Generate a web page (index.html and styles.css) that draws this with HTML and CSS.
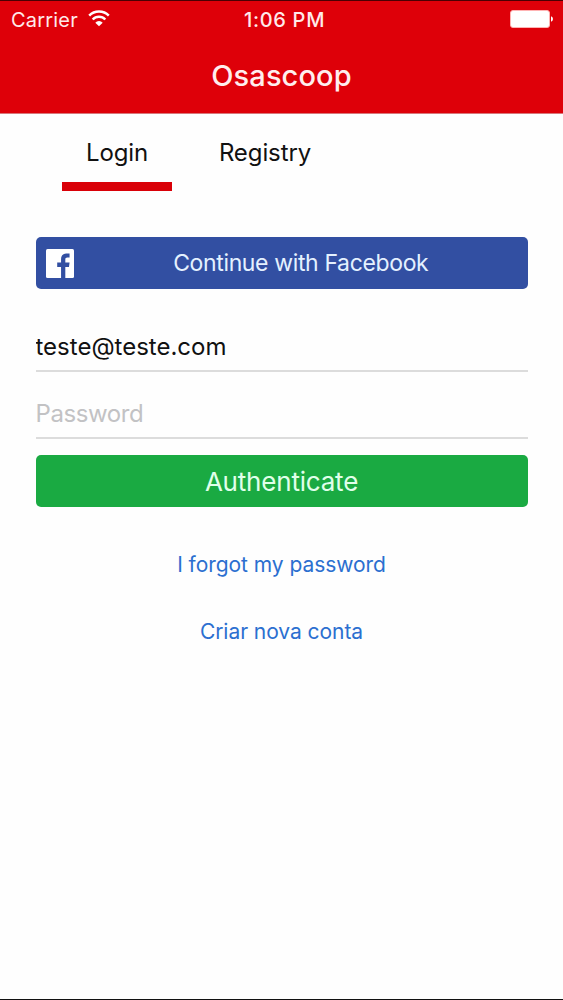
FILE: index.html
```html
<!DOCTYPE html>
<html lang="en">
<head>
    <meta charset="UTF-8">
    <meta name="viewport" content="width=device-width, initial-scale=1.0">
    <title>Osascoop</title>
    <link rel="stylesheet" href="styles.css">
</head>
<body>
    <header class="header">
        <div class="status-bar">
            <div class="status-left">
                <span class="carrier">Carrier</span>
                <svg class="wifi" width="22" height="17" viewBox="0 0 22 17">
                    <path d="M1.2 5.6 A13.8 13.8 0 0 1 20.8 5.6" fill="none" stroke="#fff" stroke-width="2.5"/>
                    <path d="M4.7 9.5 A8.6 8.6 0 0 1 17.3 9.5" fill="none" stroke="#fff" stroke-width="2.5"/>
                    <path d="M11 16.3 L7.3 12.7 A5 5 0 0 1 14.7 12.7 Z" fill="#fff"/>
                </svg>
            </div>
            <span class="time">1:06 PM</span>
            <div class="status-right">
                <svg class="battery" width="43" height="18" viewBox="0 0 43 18">
                    <rect x="0.5" y="0.5" width="39" height="17" rx="2.5" fill="#fff" stroke="#ffb3b3"/>
                    <path d="M41 6.3 Q43 7 43 9 Q43 11 41 11.7 Z" fill="#fff"/>
                </svg>
            </div>
        </div>
        <h1 class="title">Osascoop</h1>
    </header>

    <main>
        <nav class="tabs">
            <a href="#" class="tab active">Login</a>
            <a href="#" class="tab">Registry</a>
        </nav>

        <form class="login-form" id="loginForm">
            <button type="button" class="btn btn-facebook">
                <svg class="fb-icon" width="28" height="29" viewBox="0 0 29 29" preserveAspectRatio="none">
                    <rect width="29" height="29" rx="1.6" fill="#fff"/>
                    <path d="M15.6 29 V18 H11.6 V13.5 H15.6 V10.3 C15.6 6.6 17.6 4.5 21 4.5 H24.4 V8.5 H22.2 C20.4 8.5 20 9.4 20 10.8 V13.5 H24.4 L23.8 18 H20 V29 Z" fill="#324fa2"/>
                </svg>
                <span class="fb-label">Continue with Facebook</span>
            </button>
            <input type="text" class="field field-email" name="email" value="teste@teste.com">
            <input type="password" class="field field-password" name="password" placeholder="Password">
            <button type="submit" class="btn btn-submit">Authenticate</button>
        </form>

        <div class="links">
            <a href="#">I forgot my password</a>
            <a href="#">Criar nova conta</a>
        </div>
    </main>
</body>
</html>
```
FILE: styles.css
```css
* {
    box-sizing: border-box;
}
body {
    margin: 0;
    height: 1000px;
    font-family: Inter, "Liberation Sans", sans-serif;
    background: #fefefe;
    color: #111;
    border-bottom: 1px solid #111;
    overflow: hidden;
}
.header {
    height: 114px;
    background: #de0009;
    border-top: 1px solid #4a0003;
    border-bottom: 1px solid #d8777b;
    color: #fff;
}
.status-bar {
    display: grid;
    grid-template-columns: 1fr auto 1fr;
    height: 37px;
    padding: 0 10px 0 11px;
    align-items: center;
    font-size: 20px;
    color: #ffeaea;
}
.status-left {
    display: flex;
    align-items: center;
    gap: 10px;
}
.carrier {
    letter-spacing: 0.2px;
}
.wifi {
    margin-top: -3px;
}
.time {
    padding-left: 5px;
    font-weight: 500;
    letter-spacing: 0.7px;
}
.status-right {
    display: flex;
    justify-content: flex-end;
}
.battery {
    margin-top: -1px;
}
.title {
    margin: 0;
    height: 75px;
    line-height: 75px;
    text-align: center;
    font-size: 29px;
    font-weight: 500;
    letter-spacing: 0.1px;
    color: #ffeeee;
}
.tabs {
    display: flex;
    height: 77px;
    padding-left: 62px;
}
.tab {
    width: 110px;
    padding-top: 24px;
    line-height: 29px;
    text-align: center;
    font-size: 24px;
    letter-spacing: -0.1px;
    color: #111;
    text-decoration: none;
}
.tab + .tab {
    width: 186px;
}
.active {
    border-bottom: 9px solid #d90008;
}
.login-form {
    display: flex;
    flex-direction: column;
    margin: 46px 35.5px 0;
}
.btn {
    height: 52px;
    padding: 0;
    border: none;
    border-radius: 5px;
    font-family: inherit;
    color: #e4f1ff;
}
.btn-facebook {
    display: flex;
    align-items: center;
    padding-left: 10.5px;
    background: #324fa2;
    font-size: 23px;
    letter-spacing: -0.36px;
}
.fb-label {
    flex: 1;
    text-align: center;
}
.btn-submit {
    margin-top: 16px;
    background: #1aaa42;
    color: #e0ffea;
    font-size: 26px;
    letter-spacing: -0.2px;
}
.field {
    width: 100%;
    height: 67px;
    padding: 17px 0 0;
    border: none;
    border-bottom: 2px solid #dcdcdc;
    border-radius: 0;
    outline: none;
    background: transparent;
    font-family: inherit;
    font-size: 24px;
    color: #111;
}
.field-email {
    margin-top: 16px;
}
.field-password {
    letter-spacing: -0.4px;
}
.field::placeholder {
    color: #c2c2c4;
    opacity: 1;
}
.links {
    display: flex;
    flex-direction: column;
    align-items: center;
    margin-top: 44px;
    gap: 39px;
    line-height: 28px;
    font-size: 21px;
    letter-spacing: -0.05px;
}
.links a {
    color: #2b6fd0;
    text-decoration: none;
}
```
